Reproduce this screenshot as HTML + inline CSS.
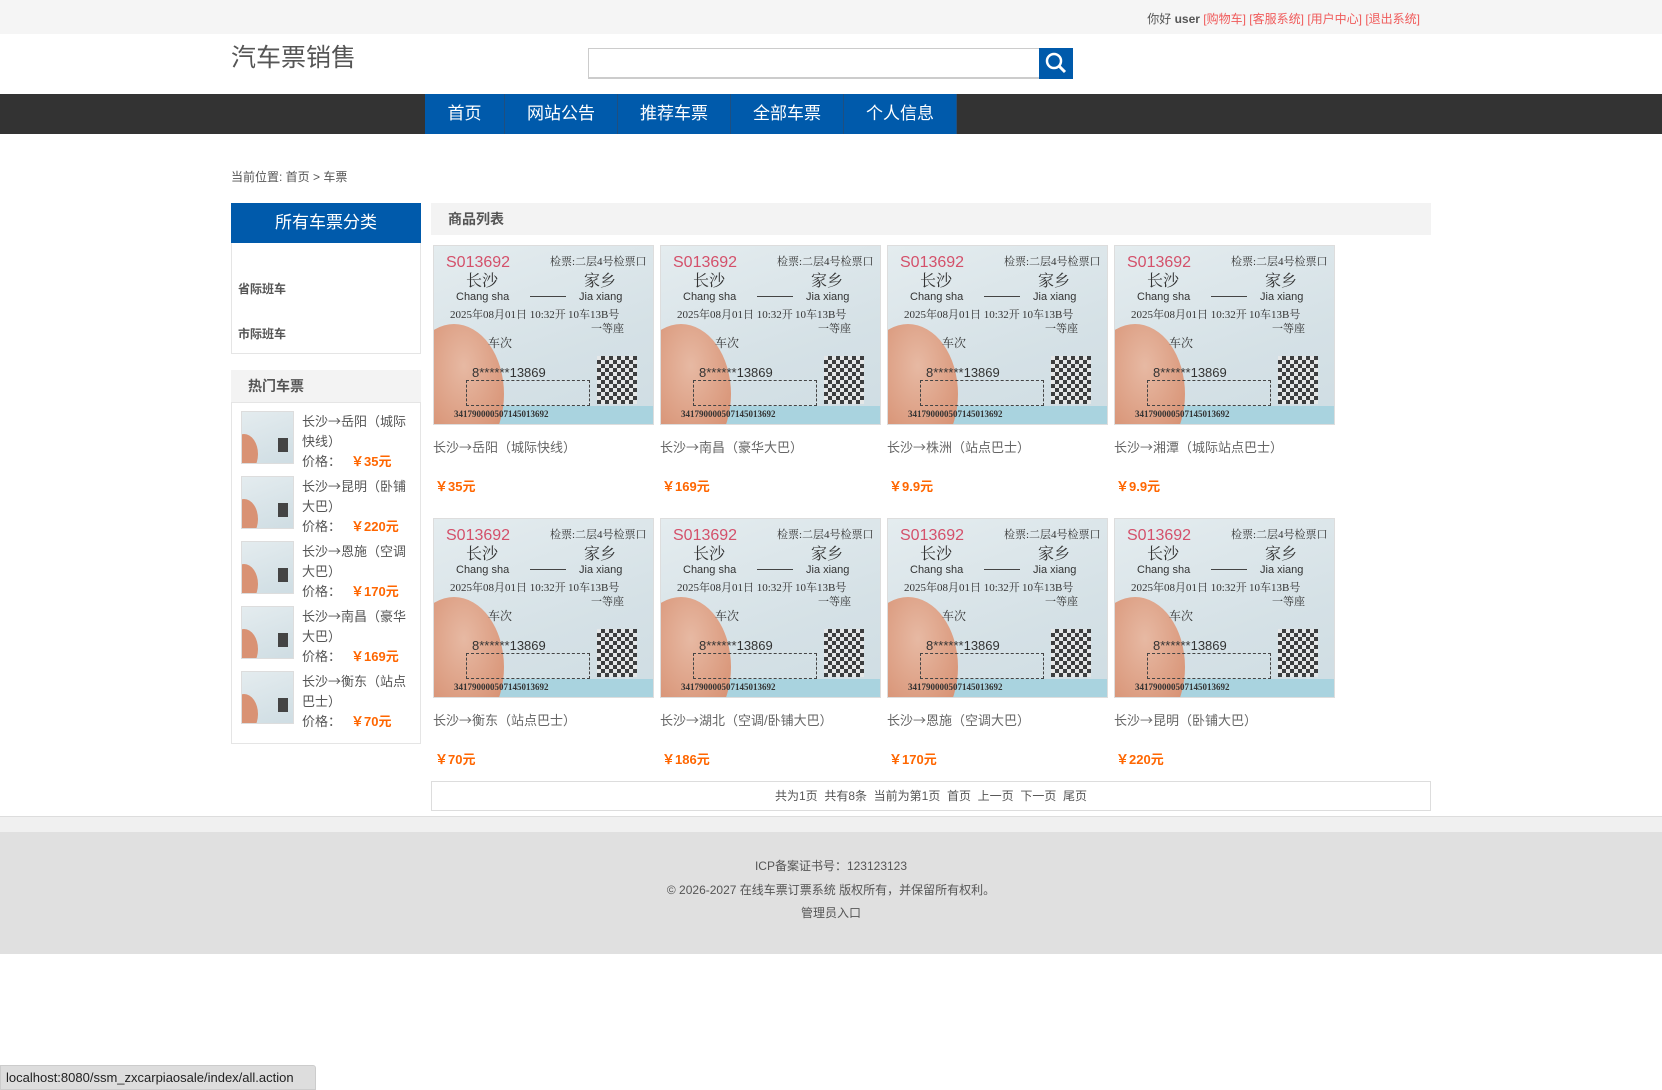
<!DOCTYPE html>
<html><head><meta charset="utf-8">
<style>
*{margin:0;padding:0;box-sizing:border-box}
body{width:1662px;height:1090px;position:relative;background:#fff;font-family:"Liberation Sans","Noto Sans CJK SC",sans-serif;color:#666;overflow:hidden;font-size:13px}
.a{position:absolute}
.ar{font-family:"Noto Sans CJK SC",sans-serif}
.top{left:0;top:0;width:1662px;height:34px;background:#f5f5f5}
.top .t{right:242px;top:10px;font-size:12px;color:#555;white-space:nowrap}
.top .t span{color:#f05a5a}
.nav{left:0;top:94px;width:1662px;height:40px;background:#333}
.nav div{position:absolute;top:0;height:40px;background:#005aab;color:#fff;font-size:17px;line-height:40px;text-align:center;border-right:1px solid #1f4f80}
.tk{position:absolute;width:221px;height:180px;overflow:hidden;background:linear-gradient(160deg,#e4ecef,#d5e1e6 60%,#cfdde3);border:1px solid #ddd;font-family:"Liberation Serif","Noto Serif CJK SC",serif;color:#333}
.tk i{position:absolute;font-style:normal;white-space:nowrap;line-height:1}
.tk .strip{position:absolute;left:0;top:160px;width:221px;height:20px;background:#a9d3df}
.tk .fing{position:absolute;left:-30px;top:78px;width:100px;height:140px;border-radius:50%;background:radial-gradient(ellipse at 60% 30%,#e7b9a3,#d58c6d 70%,#b86a4e)}
.tk .qr{position:absolute;left:163px;top:110px;width:40px;height:48px;background:repeating-conic-gradient(#222 0 25%,#e8e8e8 0 50%) 0 0/8px 8px;opacity:.85}
.tk .box{position:absolute;left:32px;top:134px;width:124px;height:26px;border:1px dashed #444}
.th{position:absolute;width:53px;height:53px;overflow:hidden;background:linear-gradient(160deg,#e4ecef,#cfdde3);border:1px solid #ddd}
.th:before{content:"";position:absolute;left:-12px;top:22px;width:28px;height:40px;border-radius:50%;background:#d99274}
.th:after{content:"";position:absolute;left:36px;top:26px;width:10px;height:14px;background:#444}
.pt{position:absolute;font-size:13px;color:#666;white-space:nowrap}
.pp{position:absolute;font-size:13px;color:#f60;font-weight:bold}
.hi{position:absolute;left:302px;width:112px;font-size:13px;line-height:20px;color:#555}
.hi b{color:#f60;margin-left:10px}
</style></head><body>
<div class="a top"><div class="a t">你好 <b>user</b> <span>[购物车]</span> <span>[客服系统]</span> <span>[用户中心]</span> <span>[退出系统]</span></div></div>
<div class="a" style="left:231px;top:38px;font-size:25px;color:#555">汽车票销售</div>
<div class="a" style="left:588px;top:48px;width:452px;height:31px;border:1px solid #ccc;border-bottom:2px solid #ccc"></div>
<div class="a" style="left:1039px;top:48px;width:34px;height:31px;background:#005aab">
<svg width="34" height="31" viewBox="0 0 34 31"><circle cx="15" cy="13" r="7" fill="none" stroke="#fff" stroke-width="2.5"/><line x1="20" y1="18" x2="26" y2="24" stroke="#fff" stroke-width="3"/></svg></div>
<div class="a nav">
<div style="left:425px;width:80px">首页</div>
<div style="left:505px;width:113px">网站公告</div>
<div style="left:618px;width:113px">推荐车票</div>
<div style="left:731px;width:113px">全部车票</div>
<div style="left:844px;width:113px">个人信息</div>
</div>
<div class="a" style="left:231px;top:168px;font-size:12px;color:#555">当前位置: 首页 &gt; 车票</div>

<div class="a" style="left:231px;top:203px;width:190px;height:40px;background:#005aab;color:#fff;font-size:17px;line-height:40px;text-align:center">所有车票分类</div>
<div class="a" style="left:231px;top:243px;width:190px;height:111px;border:1px solid #e5e5e5;border-top:none"></div>
<div class="a" style="left:238px;top:280px;font-size:12px;font-weight:bold;color:#555">省际班车</div>
<div class="a" style="left:238px;top:325px;font-size:12px;font-weight:bold;color:#555">市际班车</div>

<div class="a" style="left:231px;top:370px;width:190px;height:32px;background:#f3f3f3;font-size:14px;font-weight:bold;color:#555;line-height:32px;padding-left:17px">热门车票</div>
<div class="a" style="left:231px;top:402px;width:190px;height:342px;border:1px solid #e5e5e5"></div>
<div class="th" style="left:241px;top:411px"></div>
<div class="hi" style="top:411px">长沙<span class="ar">→</span>岳阳（城际快线）<br>价格：<b>￥35元</b></div>
<div class="th" style="left:241px;top:476px"></div>
<div class="hi" style="top:476px">长沙<span class="ar">→</span>昆明（卧铺大巴）<br>价格：<b>￥220元</b></div>
<div class="th" style="left:241px;top:541px"></div>
<div class="hi" style="top:541px">长沙<span class="ar">→</span>恩施（空调大巴）<br>价格：<b>￥170元</b></div>
<div class="th" style="left:241px;top:606px"></div>
<div class="hi" style="top:606px">长沙<span class="ar">→</span>南昌（豪华大巴）<br>价格：<b>￥169元</b></div>
<div class="th" style="left:241px;top:671px"></div>
<div class="hi" style="top:671px">长沙<span class="ar">→</span>衡东（站点巴士）<br>价格：<b>￥70元</b></div>

<div class="a" style="left:431px;top:203px;width:1000px;height:32px;background:#f3f3f3;font-size:14px;font-weight:bold;color:#555;line-height:32px;padding-left:17px">商品列表</div>

<div id="g"></div>
<script>
var d=[["长沙→岳阳（城际快线）","￥35元"],["长沙→南昌（豪华大巴）","￥169元"],["长沙→株洲（站点巴士）","￥9.9元"],["长沙→湘潭（城际站点巴士）","￥9.9元"],["长沙→衡东（站点巴士）","￥70元"],["长沙→湖北（空调/卧铺大巴）","￥186元"],["长沙→恩施（空调大巴）","￥170元"],["长沙→昆明（卧铺大巴）","￥220元"]];
var h="";
for(var i=0;i<8;i++){var x=433+(i%4)*227,y=i<4?245:518;
h+='<div class="tk" style="left:'+x+'px;top:'+y+'px"><div class="strip"></div><div class="fing"></div>'+
'<i style="left:12px;top:9px;color:#d4506a;font-size:16px;font-family:Liberation Sans Narrow,Liberation Sans,sans-serif">S013692</i>'+
'<i style="left:116px;top:11px;font-size:11px">检票:二层4号检票口</i>'+
'<i style="left:32px;top:28px;font-size:16px">长沙</i><i style="left:22px;top:46px;font-size:11px;font-family:Liberation Sans,sans-serif">Chang sha</i>'+
'<i style="left:96px;top:50px;width:36px;height:1px;background:#444"></i>'+
'<i style="left:150px;top:28px;font-size:16px">家乡</i><i style="left:145px;top:46px;font-size:11px;font-family:Liberation Sans,sans-serif">Jia xiang</i>'+
'<i style="left:16px;top:64px;font-size:11px">2025年08月01日 10:32开</i><i style="left:134px;top:64px;font-size:11px">10车13B号</i>'+
'<i style="left:157px;top:78px;font-size:11px">一等座</i><i style="left:54px;top:91px;font-size:12px">车次</i>'+
'<i style="left:38px;top:120px;font-size:13px;font-family:Liberation Sans,sans-serif">8******13869</i>'+
'<div class="box"></div><div class="qr"></div>'+
'<i style="left:20px;top:164px;font-size:9px;font-weight:bold">341790000507145013692</i></div>'+
'<div class="pt" style="left:'+x+'px;top:'+(y+192)+'px">'+d[i][0].replace("→",'<span class="ar">→</span>')+'</div>'+
'<div class="pp" style="left:'+(x+2)+'px;top:'+(y+231)+'px">'+d[i][1]+'</div>';}
document.getElementById("g").innerHTML=h;
</script>

<div class="a" style="left:431px;top:781px;width:1000px;height:30px;border:1px solid #ddd;text-align:center;line-height:28px;font-size:12px;color:#555">共为1页&nbsp; 共有8条&nbsp; 当前为第1页&nbsp; 首页&nbsp; 上一页&nbsp; 下一页&nbsp; 尾页</div>

<div class="a" style="left:0;top:816px;width:1662px;height:16px;background:#f0f0f0;border-top:1px solid #ddd"></div>
<div class="a" style="left:0;top:832px;width:1662px;height:122px;background:#e0e0e0;text-align:center;font-size:12px;color:#555">
<div style="position:absolute;top:25px;width:100%">ICP备案证书号：123123123</div>
<div style="position:absolute;top:49px;width:100%">© 2026-2027 在线车票订票系统 版权所有，并保留所有权利。</div>
<div style="position:absolute;top:72px;width:100%">管理员入口</div>
</div>
<div class="a" style="left:0;top:1065px;width:316px;height:25px;background:#ddd;border:1px solid #ccc;border-radius:0 3px 0 0;font-size:13px;color:#222;line-height:24px;padding-left:5px">localhost:8080/ssm_zxcarpiaosale/index/all.action</div>
</body></html>
